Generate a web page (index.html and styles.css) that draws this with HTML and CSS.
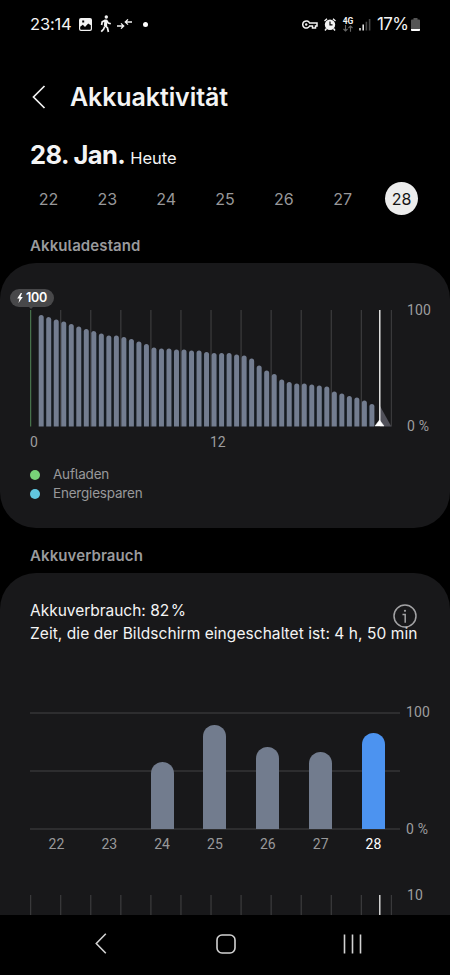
FILE: index.html
```html
<!DOCTYPE html>
<html lang="de">
<head>
<meta charset="utf-8">
<meta name="viewport" content="width=device-width">
<title>Akkuaktivität</title>
<link rel="stylesheet" href="styles.css">
</head>
<body>
<div class="screen">
  <div class="content">
    <header class="status">
      <span class="clock">23:14</span>
      <svg class="ic-photo" width="13" height="13" viewBox="0 0 13 13"><path fill="#f2f2f2" fill-rule="evenodd" d="M2 0h9a2 2 0 0 1 2 2v9a2 2 0 0 1-2 2H2a2 2 0 0 1-2-2V2a2 2 0 0 1 2-2ZM1.2 8.8v2q0 1 1 1h8.6q1 0 1-1V7.2L9.2 5.5 6 9 3.8 6.8ZM3.2 2.5v2h2v-2Z"/></svg>
      <svg class="ic-walk" width="12" height="18" viewBox="0 0 12 18"><circle cx="6.3" cy="2" r="1.7" fill="#f2f2f2"/><path d="M5.5 5 4.8 10.2 7.5 13 8.4 17M4.7 11.5 3.5 14.3 1.2 16.7M5.2 5.2 2.2 6.9 1.6 10M6.5 5.3 8.2 8 10.8 8.8" fill="none" stroke="#f2f2f2" stroke-width="1.7"/><path d="M4.8 4.5h2L7.2 11 4.2 11Z" fill="#f2f2f2"/></svg>
      <svg class="ic-arrows" width="15" height="10" viewBox="0 0 15 10"><path d="M0 7h6M4 4.4 6.7 7 4 9.6M15 3H9M11 .4 8.3 3 11 5.6" fill="none" stroke="#f2f2f2" stroke-width="1.3"/></svg>
      <i class="dot"></i>
      <span class="spacer"></span>
      <svg class="ic-key" width="16" height="9" viewBox="0 0 16 9"><path d="M7.6 3H15v3h-1.500v2h-3V6H7.6A3.6 3.6 0 1 1 7.6 3Z" fill="none" stroke="#f2f2f2" stroke-width="1.500"/><circle cx="4.2" cy="4.5" r="1.2" fill="#f2f2f2"/></svg>
      <svg class="ic-alarm" width="12" height="13" viewBox="0 0 12 13"><path d="M.5 3 3 .8M11.5 3 9 .8M2.5 10.5l-1.500 2M9.5 10.5l1.500 2" stroke="#f2f2f2" stroke-width="1.4"/><circle cx="6" cy="6.7" r="5.200" fill="#f2f2f2"/><path d="M6 3.6v3.3h2.5" fill="none" stroke="#000" stroke-width="1.2"/></svg>
      <span class="net"><b>4G</b><svg width="10" height="7" viewBox="0 0 10 7"><path d="M2.5 0v6M.5 4l2 2 2-2M7.5 6.8V.8M5.5 3l2-2 2 2" fill="none" stroke="#666" stroke-width="1.1"/></svg></span>
      <svg class="ic-signal" width="12" height="13" viewBox="0 0 12 13"><path d="M1 10v2.4M4.2 6.5v5.9" stroke="#eee" stroke-width="1.5"/><path d="M7.4 3.8v8.6M10.6 1v11.4" stroke="#484848" stroke-width="1.6"/></svg>
      <span class="percent">17%</span>
      <svg class="ic-battery" width="9" height="13" viewBox="0 0 9 13"><path d="M2.5 0h4v1.500H8q1 0 1 1V12q0 1-1 1H1q-1 0-1-1V2.500q0-1 1-1h1.500Z" fill="#555"/><path d="M0 11h9v1q0 1-1 1H1q-1 0-1-1Z" fill="#fff"/></svg>
    </header>

    <div class="titlebar">
      <svg width="14" height="24" viewBox="0 0 14 24"><path d="M12.500 1 1.500 12l11 11" fill="none" stroke="#f2f2f2" stroke-width="1.7"/></svg>
      <h1>Akkuaktivität</h1>
    </div>

    <div class="date"><strong>28. Jan.</strong><span>Heute</span></div>

    <nav class="days"><span>22</span><span>23</span><span>24</span><span>25</span><span>26</span><span>27</span><span class="active">28</span></nav>

    <h2 class="level-title">Akkuladestand</h2>
    <section class="card level-card">
      <div class="plot">
        <svg class="chart" id="level-chart" width="362" height="117" viewBox="0 0 362 117">
          <path d="M350 96 361.300 116.500H350Z" fill="#51515a"/>
          <path d="M349.800 0v112" stroke="#fff" stroke-width="1.300"/>
          <path d="M349.500 110 354 116h-9Z" fill="#fff" stroke="#fff" stroke-width=".5"/>
        </svg>
        <div class="bubble"><svg width="6" height="10" viewBox="0 0 6 10"><path d="M3.800 0 .2 5.500H2.500L1.500 10 5.800 4H3.500L5 0Z" fill="#fff"/></svg>100</div>
        <span class="axis axis-top">100</span><span class="axis axis-bottom">0 %</span>
      </div>
      <div class="hours"><span>0</span><span>12</span></div>
      <ul class="legend"><li><i class="green"></i>Aufladen</li><li><i class="cyan"></i>Energiesparen</li></ul>
    </section>

    <h2 class="usage-title">Akkuverbrauch</h2>
    <section class="card usage-card">
      <p class="usage-total">Akkuverbrauch: 82<span class="thin"></span>%</p>
      <p class="screen-time">Zeit, die der Bildschirm eingeschaltet ist: 4 h, 50 min</p>
      <svg class="info" width="24" height="24" viewBox="0 0 24 24"><circle cx="12" cy="12" r="11" fill="none" stroke="#a2a2a4" stroke-width="1.500"/><circle cx="12" cy="6.800" r="1.100" fill="#a2a2a4"/><path d="M9.500 10.500h2.700v8.200" fill="none" stroke="#a2a2a4" stroke-width="1.500"/></svg>
      <div class="week">
        <svg class="chart" width="370" height="118" viewBox="0 0 370 118"><path d="M0 .9h370M0 59h370M0 117h370" stroke="#353537" stroke-width="1.500"/></svg>
        <div class="week-bars">
          <i style="height:0"></i><i style="height:0"></i><i style="height:67px"></i><i style="height:104px"></i><i style="height:82px"></i><i style="height:77px"></i><i class="today" style="height:96px"></i>
        </div>
        <span class="axis axis-top">100</span><span class="axis axis-bottom">0 %</span>
      </div>
      <div class="week-days"><span>22</span><span>23</span><span>24</span><span>25</span><span>26</span><span>27</span><span class="today-label">28</span></div>
      <div class="plot next">
        <svg class="chart" id="next-chart" width="362" height="117" viewBox="0 0 362 117"><path d="M349.800 0v117" stroke="#f0f0f0" stroke-width="1.300"/></svg>
        <span class="axis axis-top">10</span>
      </div>
    </section>
  </div>

  <footer class="navbar">
    <svg width="12" height="21" viewBox="0 0 12 21"><path d="M10.800 .8 1.300 10.500l9.500 9.700" fill="none" stroke="#d2d2d2" stroke-width="1.600"/></svg>
    <svg class="home" width="20" height="20" viewBox="0 0 20 20"><rect x="1" y="1" width="18" height="18" rx="5" fill="none" stroke="#d2d2d2" stroke-width="1.600"/></svg>
    <svg width="19" height="20" viewBox="0 0 19 20"><path d="M1.500.5v19M9.500.5v19M17.500.5v19" stroke="#d2d2d2" stroke-width="1.600"/></svg>
  </footer>
</div>
<script src="chart.js"></script>
</body>
</html>
```
FILE: styles.css
```css
* { box-sizing: border-box; }
body { margin: 0; background: #000; color: #f4f4f4; font-family: Inter, Roboto, sans-serif; font-feature-settings: "cv05"; }
h1, h2, p, ul { margin: 0; padding: 0; }
svg { display: block; flex: none; }
i { display: block; }
.screen { width: 450px; height: 975px; display: flex; flex-direction: column; overflow: hidden; }
.content { height: 915px; overflow: hidden; display: flex; flex-direction: column; flex: none; }

.status { height: 48px; padding: 0 30px; display: flex; align-items: center; flex: none; white-space: nowrap; }
.clock { width: 49px; font-size: 16.500px; letter-spacing: -.15px; }
.ic-walk { margin-left: 8px; }
.ic-arrows { margin-left: 5px; }
.dot { width: 5px; height: 5px; border-radius: 50%; background: #fff; margin-left: 11px; }
.spacer { flex: 1; }
.ic-alarm { margin-left: 6px; }
.net { width: 12px; margin-left: 6px; display: flex; flex-direction: column; align-items: center; }
.net b { font: 700 8.500px/8px Roboto, sans-serif; }
.ic-signal { margin-left: 5px; }
.percent { width: 32px; margin-left: 6px; font-size: 17px; letter-spacing: -.6px; }
.ic-battery { margin-left: 2px; }

.titlebar { height: 97px; padding-left: 32px; display: flex; align-items: center; gap: 24px; flex: none; }
.titlebar h1 { font-size: 25px; line-height: 30px; font-weight: 600; letter-spacing: -.1px; }
.date { height: 30px; margin-top: -5px; padding-left: 30px; display: flex; align-items: baseline; gap: 5px; line-height: 30px; flex: none; }
.date strong { font-size: 25.500px; letter-spacing: -.6px; font-weight: 680; }
.date span { font-size: 16.500px; }
.days { margin-top: 12px; padding: 0 32px; height: 33px; display: flex; justify-content: space-between; align-items: center; color: #98989a; font-size: 16px; flex: none; }
.days span { width: 33px; height: 33px; line-height: 34px; border-radius: 50%; text-align: center; }
.days .active { background: #ececec; color: #141414; }
h2 { padding-left: 30px; font-size: 15px; line-height: 20px; font-weight: 600; letter-spacing: .1px; color: #9a9a9c; flex: none; }
.level-title { margin-top: 21px; }
.card { background: #18181a; position: relative; flex: none; }
.level-card { margin-top: 7px; height: 265px; border-radius: 36px; padding-top: 47px; }
.plot { position: relative; width: 362px; height: 117px; margin-left: 30px; }
.bubble { position: absolute; left: -20px; top: -21px; width: 44px; height: 18px; border-radius: 9px; background: #48484a; color: #fff; display: flex; align-items: center; justify-content: center; gap: 3px; font-size: 12.500px; font-weight: 600; line-height: 18px; letter-spacing: -.2px; }
.bubble::after { content: ""; position: absolute; left: 19px; top: 18px; border: solid transparent; border-width: 2px 2.500px 0; border-top-color: #48484a; }
.axis { position: absolute; left: 377px; font: 14px/16px Roboto, sans-serif; letter-spacing: .15px; color: #9d9d9f; white-space: nowrap; }
.axis-top { top: -8px; }
.axis-bottom { bottom: -7px; }
.hours { display: flex; margin: 7px 0 0 30px; font: 14px/16px Roboto, sans-serif; color: #9d9d9f; }
.hours span:first-child { width: 180px; }
.legend { list-style: none; margin: 15px 0 0 30px; font-size: 13.500px; line-height: 19px; letter-spacing: -.2px; color: #98989a; }
.legend li { display: flex; align-items: center; }
.legend i { width: 10px; height: 10px; border-radius: 50%; margin-right: 13px; }
.green { background: #78d278; }
.cyan { background: #61c6df; }

.usage-title { margin-top: 18px; }
.usage-card { margin-top: 7px; height: 400px; border-radius: 36px 36px 0 0; padding-top: 26px; }
.usage-card p { padding-left: 30px; font-size: 15.500px; line-height: 23px; letter-spacing: .06px; white-space: nowrap; }
.usage-card .usage-total { letter-spacing: -.02px; }
.thin { display: inline-block; width: 1.500px; }
.info { position: absolute; left: 393px; top: 31px; }
.week { position: relative; margin: 67px 0 0 30px; width: 370px; height: 118px; }
.week-bars { position: absolute; inset: 0 0 1px; display: flex; align-items: flex-end; justify-content: space-around; }
.week-bars i { width: 23px; border-radius: 11.500px 11.500px 0 0; background: #727c8e; }
.week-bars .today { background: #4c93f0; }
.week .axis { left: 376px; }
.week-days { width: 370px; margin: 6px 0 0 30px; display: flex; justify-content: space-around; font: 14px/16px Roboto, sans-serif; color: #98989a; }
.week-days .today-label { color: #fff; }
.next { margin-top: 43px; }

.navbar { height: 57px; display: flex; justify-content: space-between; align-items: center; padding: 0 88px 0 95px; flex: none; }
.home { margin-left: 2px; }
```
FILE: chart.js
```js
// Battery level samples, one per half hour, in pixels of bar height.
const levels = [
  111.5, 109.5, 107, 105, 102.5, 100, 97.5, 95.5, 93, 91, 91, 89.5, 87.5, 85, 82.5,
  79, 78, 78, 77, 77, 76, 76, 74.5, 73.5, 73.5, 73.5, 72, 71, 68, 61, 56, 52.5,
  47, 44.5, 43, 43, 42, 41, 40, 35, 33, 30.5, 29, 26, 22.5
];

const HEIGHT = 116.5;

function path(d, attributes) {
  const element = document.createElementNS('http://www.w3.org/2000/svg', 'path');
  element.setAttribute('d', d);
  for (const name in attributes) element.setAttribute(name, attributes[name]);
  return element;
}

// One line every two hours; the first may be tinted for charging.
function gridLines(firstColor) {
  return Array.from({ length: 13 }, (_, i) =>
    path(`M${0.6 + i * 30.07} 0V${HEIGHT}`, { stroke: i ? '#39393b' : firstColor, 'stroke-width': 1.3 }));
}

const bars = levels.map((level, i) => {
  const x = 8.7 + i * 7.516;
  const top = HEIGHT - level;
  return path(`M${x} ${HEIGHT}V${top + 2.5}a2.5 2.5 0 0 1 5 0V${HEIGHT}Z`, { fill: '#737d90' });
});
const gaps = levels.slice(1).map((level, i) =>
  path(`M${13.7 + i * 7.516} ${HEIGHT}v${-level + 2}h2.516v${level - 2}Z`, { fill: '#151b21' }));

document.getElementById('level-chart').prepend(...gaps, ...gridLines('#46704a'), ...bars);
document.getElementById('next-chart').prepend(...gridLines('#39393b'));
```
